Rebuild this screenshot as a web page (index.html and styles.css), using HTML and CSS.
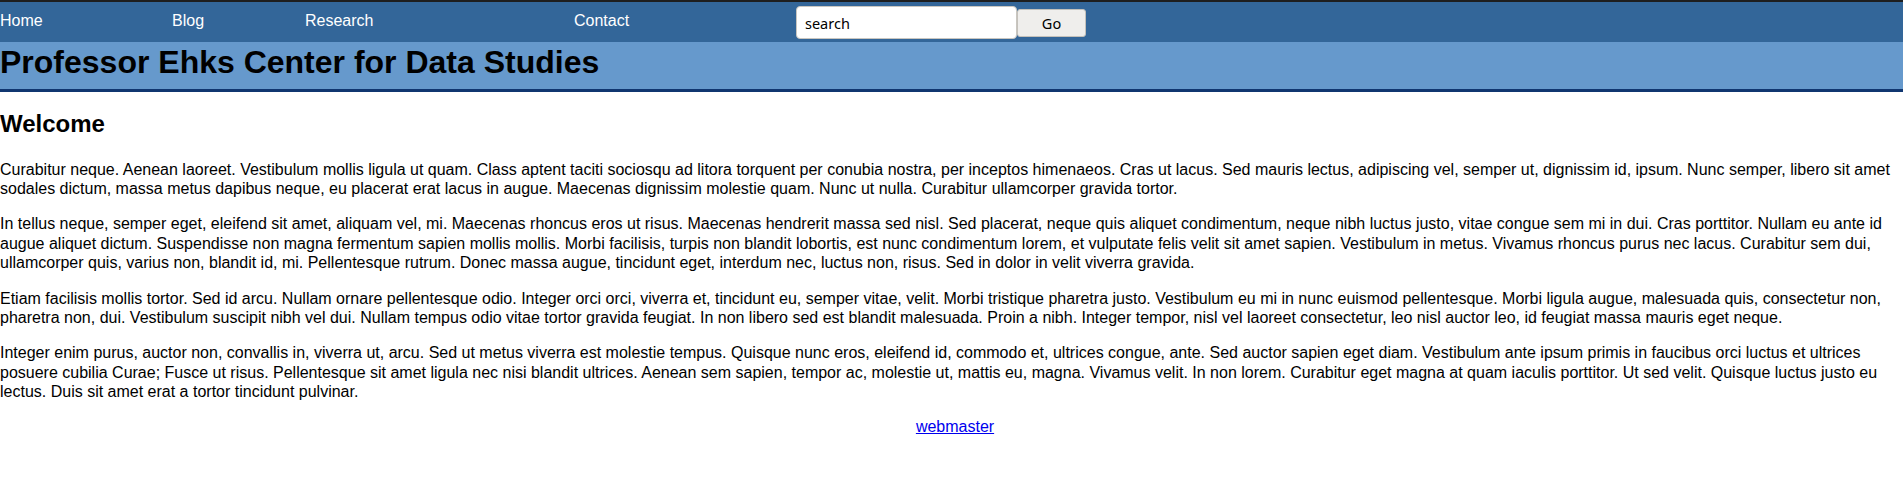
FILE: index.html
```html
<!DOCTYPE html>
<html lang="en">
<head>
<meta charset="utf-8">
<title>Professor Ehks Center for Data Studies</title>
<link rel="stylesheet" href="styles.css">
</head>
<body>
<nav class="topnav">
  <ul class="menu">
    <li class="menu-item"><a class="menu-link" href="#">Home</a></li>
    <li class="menu-item"><a class="menu-link" href="#">Blog</a></li>
    <li class="menu-item"><a class="menu-link" href="#">Research</a></li>
    <li class="menu-item"><a class="menu-link" href="#">Contact</a></li>
  </ul>
  <form class="search">
    <input class="search-input" type="text" value="search">
    <button class="search-btn" type="button">Go</button>
  </form>
</nav>
<header class="masthead">
  <h1 class="site-title">Professor Ehks Center for Data Studies</h1>
</header>
<main class="content">
  <h2 class="page-title">Welcome</h2>
  <p class="para">Curabitur neque. Aenean laoreet. Vestibulum mollis ligula ut quam. Class aptent taciti sociosqu ad litora torquent per conubia nostra, per inceptos himenaeos. Cras ut lacus. Sed mauris lectus, adipiscing vel, semper ut, dignissim id, ipsum. Nunc semper, libero sit amet sodales dictum, massa metus dapibus neque, eu placerat erat lacus in augue. Maecenas dignissim molestie quam. Nunc ut nulla. Curabitur ullamcorper gravida tortor.</p>
  <p class="para">In tellus neque, semper eget, eleifend sit amet, aliquam vel, mi. Maecenas rhoncus eros ut risus. Maecenas hendrerit massa sed nisl. Sed placerat, neque quis aliquet condimentum, neque nibh luctus justo, vitae congue sem mi in dui. Cras porttitor. Nullam eu ante id augue aliquet dictum. Suspendisse non magna fermentum sapien mollis mollis. Morbi facilisis, turpis non blandit lobortis, est nunc condimentum lorem, et vulputate felis velit sit amet sapien. Vestibulum in metus. Vivamus rhoncus purus nec lacus. Curabitur sem dui, ullamcorper quis, varius non, blandit id, mi. Pellentesque rutrum. Donec massa augue, tincidunt eget, interdum nec, luctus non, risus. Sed in dolor in velit viverra gravida.</p>
  <p class="para">Etiam facilisis mollis tortor. Sed id arcu. Nullam ornare pellentesque odio. Integer orci orci, viverra et, tincidunt eu, semper vitae, velit. Morbi tristique pharetra justo. Vestibulum eu mi in nunc euismod pellentesque. Morbi ligula augue, malesuada quis, consectetur non, pharetra non, dui. Vestibulum suscipit nibh vel dui. Nullam tempus odio vitae tortor gravida feugiat. In non libero sed est blandit malesuada. Proin a nibh. Integer tempor, nisl vel laoreet consectetur, leo nisl auctor leo, id feugiat massa mauris eget neque.</p>
  <p class="para">Integer enim purus, auctor non, convallis in, viverra ut, arcu. Sed ut metus viverra est molestie tempus. Quisque nunc eros, eleifend id, commodo et, ultrices congue, ante. Sed auctor sapien eget diam. Vestibulum ante ipsum primis in faucibus orci luctus et ultrices posuere cubilia Curae; Fusce ut risus. Pellentesque sit amet ligula nec nisi blandit ultrices. Aenean sem sapien, tempor ac, molestie ut, mattis eu, magna. Vivamus velit. In non lorem. Curabitur eget magna at quam iaculis porttitor. Ut sed velit. Quisque luctus justo eu lectus. Duis sit amet erat a tortor tincidunt pulvinar.</p>
</main>
<footer class="footer">
  <a class="footer-link" href="#">webmaster</a>
</footer>
</body>
</html>
```
FILE: styles.css
```css
html, body {
  margin: 0;
  padding: 0;
  background: #ffffff;
  color: #000000;
  font-family: "Liberation Sans", Arial, sans-serif;
  font-size: 16px;
}

.topnav {
  display: flex;
  align-items: center;
  height: 40px;
  background: #336699;
  border-top: 2px solid #1e1e1e;
}

.menu {
  display: grid;
  grid-template-columns: 172px 133px 269px 222px;
  margin: 0;
  padding: 0;
  list-style: none;
}

.menu-item {
  margin: 0;
  padding: 0 0 3px 0;
}

.menu-link {
  color: #ffffff;
  text-decoration: none;
}

.search {
  display: flex;
  align-items: center;
  margin: 0;
  padding-top: 1px;
}

.search-input {
  box-sizing: border-box;
  width: 221px;
  height: 33px;
  margin: 0;
  padding: 0 8px;
  border: 1px solid #c9c6c0;
  border-radius: 4px;
  background: #ffffff;
  color: #000000;
  font-family: "Noto Sans", "Open Sans", sans-serif;
  font-size: 14.5px;
}

.search-btn {
  box-sizing: border-box;
  width: 69px;
  height: 28px;
  margin: 0;
  padding: 0;
  border: 1px solid #c4c1bb;
  border-radius: 3px;
  background: #efeeec;
  color: #000000;
  font-family: "Noto Sans", "Open Sans", sans-serif;
  font-size: 14.5px;
}

.masthead {
  box-sizing: border-box;
  height: 50px;
  padding-top: 2px;
  background: #6699cc;
  border-bottom: 3px solid #103670;
}

.site-title {
  margin: 0;
  font-size: 32px;
  font-weight: bold;
}

.content {
  padding: 0;
}

.page-title {
  margin: 18px 0 22px 0;
  font-size: 24px;
  line-height: 1.15;
  font-weight: bold;
}

.para {
  margin: 16px 0;
  line-height: 19.4px;
}

.footer {
  padding-left: 7px;
  text-align: center;
}

.footer-link {
  color: #0000ee;
}
```
